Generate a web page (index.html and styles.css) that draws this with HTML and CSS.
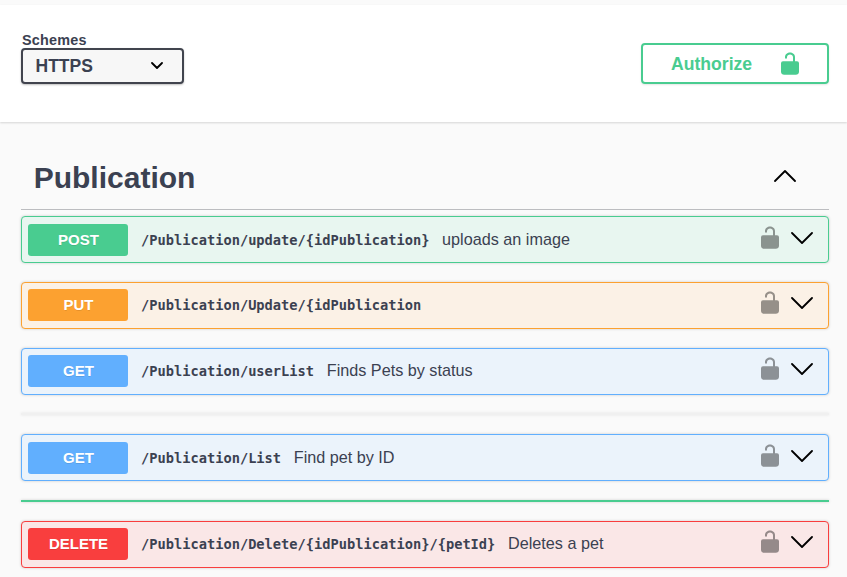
FILE: index.html
```html
<!DOCTYPE html>
<html lang="en">
<head>
<meta charset="utf-8">
<title>API</title>
<link rel="stylesheet" href="styles.css">
</head>
<body>
<svg class="defs" aria-hidden="true">
  <symbol id="unlock" viewBox="0 0 18 23"><path d="M2 9.3H12V5.2C12 1.6 6.2 1.4 6 5.2V6.4H4V5C4.2-1.2 13.9-1 14 5V9.3H16Q18 9.5 18 11.3V19.8C18 21.9 16.6 22.8 14.8 22.8H3.2C1.4 22.8 0 21.9 0 19.8V11.3Q0 9.5 2 9.3Z"/></symbol>
  <symbol id="down" viewBox="0 0 22 12"><path d="M1 1L11 11L21 1"/></symbol>
</svg>
<header class="schemes">
  <label class="schemes-field">
    <span class="schemes-label">Schemes</span>
    <span class="select"><span class="select-value">HTTPS</span><svg class="select-arrow" viewBox="0 0 12 7"><path d="M1 1L6 6L11 1"/></svg></span>
  </label>
  <button class="authorize"><span class="authorize-text">Authorize</span><svg class="lock"><use href="#unlock"/></svg></button>
</header>
<main class="section">
  <h2 class="tag">Publication<svg class="chevron chevron-up"><use href="#down"/></svg></h2>
  <div class="op post"><span class="method">POST</span><code class="path">/Publication/update/{idPublication}</code><span class="summary">uploads an image</span><svg class="lock"><use href="#unlock"/></svg><svg class="chevron"><use href="#down"/></svg></div>
  <div class="op op-raised put"><span class="method">PUT</span><code class="path">/Publication/Update/{idPublication</code><span class="summary"></span><svg class="lock"><use href="#unlock"/></svg><svg class="chevron"><use href="#down"/></svg></div>
  <div class="op op-raised get"><span class="method">GET</span><code class="path">/Publication/userList</code><span class="summary">Finds Pets by status</span><svg class="lock"><use href="#unlock"/></svg><svg class="chevron"><use href="#down"/></svg></div>
  <div class="divider"></div>
  <div class="op get"><span class="method">GET</span><code class="path">/Publication/List</code><span class="summary">Find pet by ID</span><svg class="lock"><use href="#unlock"/></svg><svg class="chevron"><use href="#down"/></svg></div>
  <div class="divider divider-green"></div>
  <div class="op op-raised delete"><span class="method">DELETE</span><code class="path">/Publication/Delete/{idPublication}/{petId}</code><span class="summary">Deletes a pet</span><svg class="lock"><use href="#unlock"/></svg><svg class="chevron"><use href="#down"/></svg></div>
</main>
</body>
</html>
```
FILE: styles.css
```css
* { box-sizing: border-box; }
body {
  margin: 0;
  padding-top: 5px;
  background: #fafafa;
  color: #3b4151;
  font-family: "Liberation Sans", Arial, sans-serif;
  overflow: hidden;
}
.defs { position: absolute; width: 0; height: 0; }
.schemes {
  display: flex;
  justify-content: space-between;
  align-items: flex-start;
  height: 117px;
  padding: 27px 18px 0 21px;
  background: #fff;
  box-shadow: 0 1px 2px rgba(0, 0, 0, .15);
}
.schemes-field { display: flex; flex-direction: column; }
.schemes-label {
  height: 16px;
  padding-left: 1px;
  font-size: 14.4px;
  font-weight: bold;
  line-height: 17px;
  letter-spacing: .2px;
}
.select {
  display: flex;
  align-items: center;
  justify-content: space-between;
  width: 163px;
  height: 36px;
  padding: 0 19.5px 1px 12.5px;
  border: 2px solid #41444e;
  border-radius: 4px;
  background: #f7f7f7;
  box-shadow: 0 1px 2px rgba(0, 0, 0, .25);
  font-size: 17.5px;
  font-weight: bold;
}
.select-value { padding-top: 2px; }
.select-arrow { width: 12px; height: 7px; fill: none; stroke: #000; stroke-width: 1.8; stroke-linecap: round; stroke-linejoin: round; }
.authorize {
  display: flex;
  align-items: center;
  justify-content: space-between;
  width: 188px;
  height: 41px;
  margin-top: 11px;
  padding: 0 28.5px 0 28px;
  border: 2px solid #49cc90;
  border-radius: 4px;
  background: transparent;
  box-shadow: 0 1px 2px rgba(0, 0, 0, .1);
  color: #49cc90;
  font: bold 17.6px "Liberation Sans", Arial, sans-serif;
}
.authorize-text { padding-top: 2px; }
.lock { width: 18px; height: 23px; flex: none; fill: currentColor; }
.section { padding: 0 18px 0 21px; }
.tag {
  display: flex;
  align-items: center;
  justify-content: space-between;
  height: 88px;
  margin: 0 0 6px;
  padding: 24px 33.5px 0 12.7px;
  border-bottom: 1px solid #bcbdc0;
  font-size: 30px;
}
.chevron { width: 22px; height: 12px; flex: none; fill: none; stroke: #000; stroke-width: 1.8; stroke-linecap: round; stroke-linejoin: round; }
.chevron-up { margin-top: -3px; transform: rotate(180deg); }
.op {
  display: flex;
  align-items: center;
  height: 47px;
  margin-bottom: 19px;
  padding: 0 15.5px 0 6px;
  border: 1px solid;
  border-radius: 4px;
  box-shadow: 0 0 3px rgba(0, 0, 0, .19);
}
.op-raised { padding-bottom: 1.2px; }
.method {
  width: 100px;
  height: 32px;
  margin-right: 13px;
  padding-left: 1px;
  border-radius: 3px;
  color: #fff;
  font-size: 15px;
  font-weight: bold;
  line-height: 32px;
  text-align: center;
  text-shadow: 0 1px 0 rgba(0, 0, 0, .1);
}
.path { font: bold 13.7px "DejaVu Sans Mono", monospace; }
.summary { flex: 1; margin-left: 12.7px; font-size: 16.2px; }
.op .lock { margin: -4px 12px 0 0; color: #000; opacity: .4; }
.op .chevron { margin-top: -3px; }
.post { border-color: #49cc90; background: #e8f6f0; }
.post .method { background: #49cc90; }
.put { border-color: #fca130; background: #fbf1e6; }
.put .method { background: #fca130; }
.get { border-color: #61affe; background: #ebf3fb; }
.get .method { background: #61affe; }
.delete { border-color: #f93e3e; background: #fae7e7; }
.delete .method { background: #f93e3e; }
.divider { height: 2px; margin-bottom: 19px; margin-top: -1px; background: #f0f0f0; box-shadow: 0 0 3px rgba(0, 0, 0, .1); }
.divider-green { margin-top: 0; background: #49cc90; box-shadow: 0 0 3px rgba(0, 0, 0, .19); }
```
